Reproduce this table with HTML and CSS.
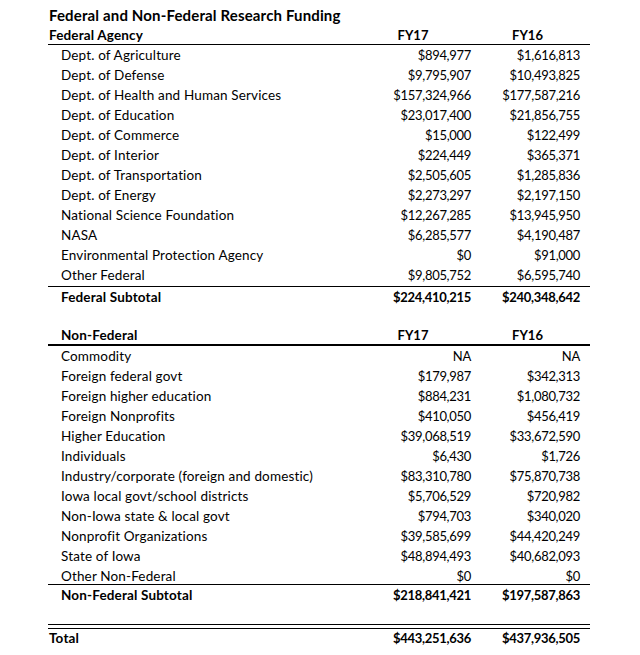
FILE: index.html
```html
<!DOCTYPE html>
<html>
<head>
<meta charset="utf-8">
<link rel="stylesheet" href="styles.css">
</head>
<body>
<div class="sheet">
  <div class="title">Federal and Non-Federal Research Funding</div>

  <div class="row head">
    <span class="lab flush">Federal Agency</span><span class="hd">FY17</span><span class="hd fy16">FY16</span>
  </div>
  <div class="row"><span class="lab">Dept. of Agriculture</span><span class="num">$894,977</span><span class="num fy16">$1,616,813</span></div>
  <div class="row"><span class="lab">Dept. of Defense</span><span class="num">$9,795,907</span><span class="num fy16">$10,493,825</span></div>
  <div class="row"><span class="lab">Dept. of Health and Human Services</span><span class="num">$157,324,966</span><span class="num fy16">$177,587,216</span></div>
  <div class="row"><span class="lab">Dept. of Education</span><span class="num">$23,017,400</span><span class="num fy16">$21,856,755</span></div>
  <div class="row"><span class="lab">Dept. of Commerce</span><span class="num">$15,000</span><span class="num fy16">$122,499</span></div>
  <div class="row"><span class="lab">Dept. of Interior</span><span class="num">$224,449</span><span class="num fy16">$365,371</span></div>
  <div class="row"><span class="lab">Dept. of Transportation</span><span class="num">$2,505,605</span><span class="num fy16">$1,285,836</span></div>
  <div class="row"><span class="lab">Dept. of Energy</span><span class="num">$2,273,297</span><span class="num fy16">$2,197,150</span></div>
  <div class="row"><span class="lab">National Science Foundation</span><span class="num">$12,267,285</span><span class="num fy16">$13,945,950</span></div>
  <div class="row"><span class="lab">NASA</span><span class="num">$6,285,577</span><span class="num fy16">$4,190,487</span></div>
  <div class="row"><span class="lab">Environmental Protection Agency</span><span class="num">$0</span><span class="num fy16">$91,000</span></div>
  <div class="row last-fed"><span class="lab">Other Federal</span><span class="num">$9,805,752</span><span class="num fy16">$6,595,740</span></div>
  <div class="row bold"><span class="lab">Federal Subtotal</span><span class="num">$224,410,215</span><span class="num fy16">$240,348,642</span></div>
  <div class="gap"></div>

  <div class="row head thick">
    <span class="lab">Non-Federal</span><span class="hd">FY17</span><span class="hd fy16">FY16</span>
  </div>
  <div class="row"><span class="lab">Commodity</span><span class="num">NA</span><span class="num fy16">NA</span></div>
  <div class="row"><span class="lab">Foreign federal govt</span><span class="num">$179,987</span><span class="num fy16">$342,313</span></div>
  <div class="row"><span class="lab">Foreign higher education</span><span class="num">$884,231</span><span class="num fy16">$1,080,732</span></div>
  <div class="row"><span class="lab">Foreign Nonprofits</span><span class="num">$410,050</span><span class="num fy16">$456,419</span></div>
  <div class="row"><span class="lab">Higher Education</span><span class="num">$39,068,519</span><span class="num fy16">$33,672,590</span></div>
  <div class="row"><span class="lab">Individuals</span><span class="num">$6,430</span><span class="num fy16">$1,726</span></div>
  <div class="row"><span class="lab">Industry/corporate (foreign and domestic)</span><span class="num">$83,310,780</span><span class="num fy16">$75,870,738</span></div>
  <div class="row"><span class="lab">Iowa local govt/school districts</span><span class="num">$5,706,529</span><span class="num fy16">$720,982</span></div>
  <div class="row"><span class="lab">Non-Iowa state &amp; local govt</span><span class="num">$794,703</span><span class="num fy16">$340,020</span></div>
  <div class="row"><span class="lab">Nonprofit Organizations</span><span class="num">$39,585,699</span><span class="num fy16">$44,420,249</span></div>
  <div class="row"><span class="lab">State of Iowa</span><span class="num">$48,894,493</span><span class="num fy16">$40,682,093</span></div>
  <div class="row last-nonfed"><span class="lab">Other Non-Federal</span><span class="num">$0</span><span class="num fy16">$0</span></div>
  <div class="row bold"><span class="lab">Non-Federal Subtotal</span><span class="num">$218,841,421</span><span class="num fy16">$197,587,863</span></div>
  <div class="gap dbl"></div>

  <div class="row bold total"><span class="lab flush">Total</span><span class="num">$443,251,636</span><span class="num fy16">$437,936,505</span></div>
</div>
</body>
</html>
```

FILE: styles.css
```css
html, body {
  margin: 0;
  padding: 0;
  background: #fff;
}
.sheet {
  width: 542px;
  margin-left: 48px;
  padding-top: 5px;
  font-family: Lato, "Open Sans", sans-serif;
  color: #000;
}
.title {
  height: 20px;
  line-height: 20px;
  padding-left: 1px;
  font-size: 15px;
  font-weight: 700;
  letter-spacing: 0.15px;
  white-space: nowrap;
}
.row {
  display: grid;
  grid-template-columns: 307px 120px 115px;
  box-sizing: border-box;
  height: 20px;
  line-height: 20px;
  white-space: nowrap;
}
.lab {
  padding-left: 13px;
  font-size: 13.5px;
  letter-spacing: 0.15px;
}
.lab.flush { padding-left: 1px; }
.num {
  text-align: right;
  padding-right: 4px;
  font-size: 13px;
  letter-spacing: -0.3px;
}
.hd {
  text-align: center;
  padding-right: 4px;
  font-size: 13px;
  font-weight: 700;
}
.num.fy16, .hd.fy16 { padding-right: 10px; }
.head {
  font-weight: 700;
  border-bottom: 1px solid #000;
}
.head.thick {
  border-bottom: 2px solid #000;
  line-height: 18px;
}
.last-fed {
  height: 22px;
  border-bottom: 1px solid #000;
}
.last-nonfed {
  height: 19px;
  border-bottom: 1px solid #000;
}
.bold { font-weight: 700; }
.gap { height: 19px; }
.gap.dbl {
  height: 19px;
  border-bottom: 1px solid #000;
  margin-bottom: 3px;
}
.total {
  border-top: 1px solid #000;
  line-height: 19px;
}
```
